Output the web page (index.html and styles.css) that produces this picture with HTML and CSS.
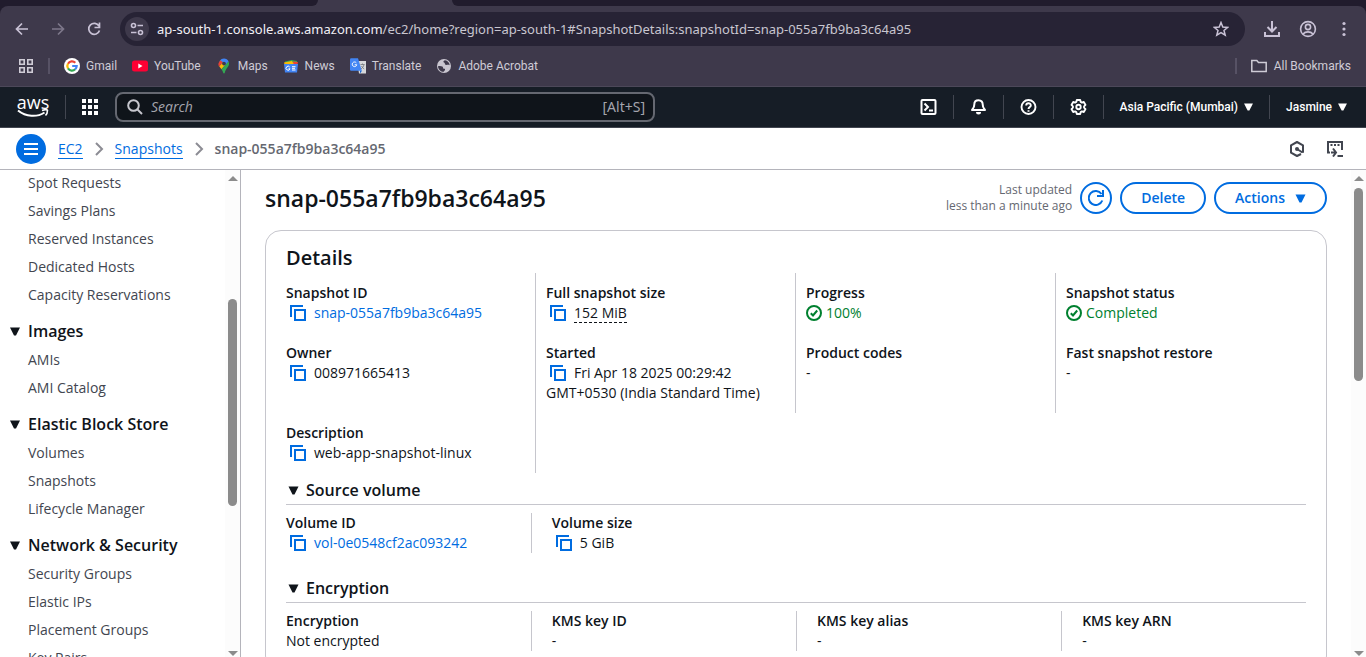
FILE: index.html
```
<!DOCTYPE html>
<html lang="en">
<head>
<meta charset="utf-8">
<title>Snapshot details | EC2 | ap-south-1</title>
<link rel="stylesheet" href="styles.css">
</head>
<body>
<svg class="sprite" aria-hidden="true">
  <symbol id="copy" viewBox="0 0 16 16"><path d="M1 12V1h12" fill="none" stroke="currentColor" stroke-width="2"/><rect x="5" y="5" width="10" height="10" fill="none" stroke="currentColor" stroke-width="2"/></symbol>
  <symbol id="caret" viewBox="0 0 10 9"><path d="M0 .5h10L6 8.500H4z" fill="currentColor"/></symbol>
  <symbol id="check" viewBox="0 0 16 16"><circle cx="8" cy="8" r="7" fill="none" stroke="currentColor" stroke-width="2"/><path d="M4.800 8.200l2.200 2.300 4.200-5" fill="none" stroke="currentColor" stroke-width="2"/></symbol>
  <symbol id="chev" viewBox="0 0 10 14"><path d="M2 1l6 6-6 6" fill="none" stroke="currentColor" stroke-width="2"/></symbol>
</svg>

<div class="browser">
  <div class="tabstrip"><span class="tab-left"></span><span class="tab-right"></span></div>
  <div class="toolwrap"><div class="tools">
    <div class="toolbar">
      <button class="tool" aria-label="Back"><svg width="16" height="16" viewBox="0 0 16 16"><path d="M14 8H3M8 2.500L2.500 8 8 13.500" fill="none" stroke="currentColor" stroke-width="1.700"/></svg></button>
      <button class="tool dim" aria-label="Forward"><svg width="16" height="16" viewBox="0 0 16 16"><path d="M2 8h11M8 2.500L13.500 8 8 13.500" fill="none" stroke="currentColor" stroke-width="1.700"/></svg></button>
      <button class="tool" aria-label="Reload"><svg width="16" height="16" viewBox="0 0 16 16"><path d="M13 5A5.500 5.500 0 1 0 13.500 9.500M13.500 1.500v5h-5" fill="none" stroke="currentColor" stroke-width="1.700"/></svg></button>
      <div class="address">
        <button class="site" aria-label="Site information"><svg width="14" height="14" viewBox="0 0 14 14"><g fill="none" stroke="currentColor" stroke-width="1.600"><circle cx="3.500" cy="3.500" r="2"/><path d="M7.500 3.500H13M1 10.500h5.500"/><circle cx="10.500" cy="10.500" r="2"/></g></svg></button>
        <span class="url"><b>ap-south-1.console.aws.amazon.com</b>/ec2/home?region=ap-south-1#SnapshotDetails:snapshotId=snap-055a7fb9ba3c64a95</span>
        <button class="star" aria-label="Bookmark this tab"><svg width="16" height="16" viewBox="0 0 16 16"><path d="M8 1.500l1.800 4.500 4.900.4-3.700 3.100 1.200 4.700L8 11.600l-4.200 2.600L5 9.500 1.300 6.400l4.900-.4z" fill="none" stroke="currentColor" stroke-width="1.500"/></svg></button>
      </div>
      <button class="tool right" aria-label="Downloads"><svg width="18" height="18" viewBox="0 0 18 18"><path d="M9 1v10M4.500 7L9 11.500 13.500 7M2 12v4h14v-4" fill="none" stroke="currentColor" stroke-width="2"/></svg></button>
      <button class="tool right" aria-label="Profile"><svg width="18" height="18" viewBox="0 0 18 18"><g fill="none" stroke="currentColor" stroke-width="1.600"><circle cx="9" cy="9" r="7.400"/><circle cx="9" cy="7" r="2.600"/><path d="M4 14c2.500-2.800 7.500-2.800 10 0"/></g></svg></button>
      <button class="tool right" aria-label="Menu"><svg width="18" height="18" viewBox="0 0 18 18" fill="currentColor"><circle cx="9" cy="3.500" r="1.600"/><circle cx="9" cy="9" r="1.600"/><circle cx="9" cy="14.500" r="1.600"/></svg></button>
    </div>
    <div class="bookmarks">
      <button class="apps" aria-label="Apps"><svg width="14" height="14" viewBox="0 0 14 14"><g fill="none" stroke="currentColor" stroke-width="1.600"><path d="M.8.8h4.400v4.400H.8zM8.800.8h4.400v4.400H8.800zM.8 8.800h4.400v4.400H.8zM8.800 8.800h4.400v4.400H8.800z"/></g></svg></button>
      <span class="bar"></span>
      <a href="#"><svg width="16" height="16" viewBox="0 0 16 16"><circle cx="8" cy="8" r="8" fill="#fff"/><g fill="none" stroke-width="2.200"><path d="M11.300 4.700A4.700 4.700 0 0 0 4 5.700" stroke="#ea4335"/><path d="M4 5.600a4.700 4.700 0 0 0 0 4.800" stroke="#fbbc05"/><path d="M4 10.400a4.700 4.700 0 0 0 7.200.9" stroke="#34a853"/><path d="M11.100 11.400A4.700 4.700 0 0 0 12.700 8H8.200" stroke="#4285f4"/></g></svg>Gmail</a>
      <a href="#"><svg width="16" height="16" viewBox="0 0 16 16"><rect y="2.500" width="16" height="11" rx="2.500" fill="#ff0033"/><path d="M6.300 5.500v5l4.200-2.500z" fill="#fff"/></svg>YouTube</a>
      <a href="#"><svg width="16" height="16" viewBox="0 0 16 16"><path d="M3.500 3.200C4.800 1.200 6.300.5 8 .5c2 0 3.800 1.200 4.600 3L8 9z" fill="#4285f4"/><path d="M3.200 8.300L7 4.300 9 7 5.500 11.200C4.700 10.200 3.800 9.300 3.200 8.300z" fill="#fbbc05"/><path d="M12.600 3.500c.9 2 .4 4-.8 5.600C10.300 11 9.300 12.500 8.800 14.800c-.2.900-1.400.9-1.600 0-.3-1.300-.9-2.500-1.700-3.600z" fill="#34a853"/><path d="M2.900 4.500L4.300 2.200l2.700 2-4 4.200c-.7-1.200-.9-2.600-.1-3.900z" fill="#ea4335"/><circle cx="8" cy="5.600" r="1.900" fill="#3e394b"/></svg>Maps</a>
      <a href="#"><svg width="16" height="16" viewBox="0 0 16 16"><path d="M2 3.500l7-1.500 1 5H3z" fill="#34a853"/><path d="M8 2l6 1-1 5H7z" fill="#34a853"/><path d="M10 3.500l5 .5-1 4h-4z" fill="#ea4335"/><path d="M1 4.500l8-1.500 3 5H2z" fill="#fbbc05"/><path d="M1 6h14l-1 8.500H2z" fill="#4285f4"/><path d="M6.700 9a2 2 0 1 0 .3 1.800H5.500M9 8.700h3.500M9 10.300h3M9 12h3.500" fill="none" stroke="#fff"/></svg>News</a>
      <a href="#"><svg width="16" height="16" viewBox="0 0 16 16"><path d="M7 3h9v12.500H9z" fill="#d5d7da"/><path d="M0 1.500Q0 .3 1.200.3H8l3.800 12.500H1.200Q0 12.800 0 11.600z" fill="#4285f4"/><path d="M10 12.800h2L10 15.500z" fill="#1967d2"/><path d="M6.300 4.800a2.300 2.300 0 1 0 .5 2H4.700" fill="none" stroke="#fff"/><path d="M10.500 6.500h4M12.500 5.500v1M14 6.500c-.4 2-1.500 3.500-3 4.500M11.500 8c.6 1.300 1.500 2.300 2.700 3" fill="none" stroke="#70757a" stroke-width=".8"/></svg>Translate</a>
      <a href="#"><svg width="16" height="16" viewBox="0 0 16 16"><circle cx="8" cy="8" r="7" fill="#c9c6d0"/><path d="M2 8.200c1.800-.6 3.300-.2 4.300.3 1.200.6.200 2.200 2 2.300 1.500.1.500 2-.6 3-2.600.2-5.500-2-5.700-5.600zM9 2.300c-1.700.5-2.200 1.900-1 2.300 1.500.5.300 1.600 1.500 2.200 1 .5 2.500-.6 4.200.4C13.300 4.500 11.700 2.800 9 2.300z" fill="#3e394b"/></svg>Adobe Acrobat</a>
      <span class="grow"></span>
      <span class="bar"></span>
      <a class="all" href="#"><svg width="16" height="16" viewBox="0 0 16 16"><path d="M.8 12.500v-10h5l1.700 2h7.700v9H.8z" fill="none" stroke="currentColor" stroke-width="1.500"/></svg>All Bookmarks</a>
    </div>
  </div></div>
</div>

<header class="aws">
  <a class="logo" href="#" aria-label="AWS home"><span>aws</span><svg width="32" height="9" viewBox="0 0 32 9"><path d="M1 1.500C9 8 20 8.500 27.500 3.500" fill="none" stroke="currentColor" stroke-width="2"/><path d="M25 1.500c3-1.200 5.500-.8 5.500-.3 0 1.300-.7 4-2 5.300" fill="none" stroke="currentColor" stroke-width="1.600"/></svg></a>
  <span class="split"></span>
  <button class="services" aria-label="Services"><svg width="16" height="16" viewBox="0 0 16 16"><path d="M0 0h4v4H0zM6 0h4v4H6zM12 0h4v4h-4zM0 6h4v4H0zM6 6h4v4H6zM12 6h4v4h-4zM0 12h4v4H0zM6 12h4v4H6zM12 12h4v4h-4z" fill="currentColor"/></svg></button>
  <label class="search">
    <svg width="16" height="16" viewBox="0 0 16 16"><circle cx="6.500" cy="6.500" r="5.300" fill="none" stroke="currentColor" stroke-width="2"/><path d="M10.500 10.500l4.500 4.500" stroke="currentColor" stroke-width="2"/></svg>
    <input type="search" placeholder="Search" aria-label="Search">
    <kbd>[Alt+S]</kbd>
  </label>
  <nav class="account">
    <button aria-label="CloudShell"><svg width="17" height="16" viewBox="0 0 16 16"><g fill="none" stroke="currentColor" stroke-width="2"><rect x="1" y="1" width="14" height="14" rx="1"/><path d="M4 4.500L7.500 8 4 11.500M8.500 11.500h4"/></g></svg></button>
    <button aria-label="Notifications"><svg width="17" height="16" viewBox="0 0 16 16"><path d="M8 1.200c-3 0-4.200 2-4.200 4.300 0 3-1.300 4-2.300 5.500h13c-1-1.500-2.300-2.500-2.300-5.500C12.200 3.200 11 1.200 8 1.200z" fill="none" stroke="currentColor" stroke-width="2" stroke-linejoin="round"/><path d="M5.500 13h5a2.500 2.500 0 0 1-5 0z" fill="currentColor"/></svg></button>
    <button aria-label="Help"><svg width="17" height="16" viewBox="0 0 16 16"><g fill="none" stroke="currentColor" stroke-width="1.900"><circle cx="8" cy="8" r="7"/><path d="M5.700 6.500C5.700 3.600 10.300 3.600 10.300 6.400 10.300 8 8 7.900 8 10M8 11.200v1.600"/></g></svg></button>
    <button aria-label="Settings"><svg width="17" height="16" viewBox="0 0 16 16"><g fill="none" stroke="currentColor" stroke-width="1.900" stroke-linejoin="round"><path d="M6.300 1h3.400l.5 1.900 1.200.7 1.900-.6L15 5.900l-1.400 1.400v1.400L15 10.100 13.300 13l-1.900-.6-1.200.7-.5 1.900H6.300l-.5-1.900-1.200-.7-1.900.6L1 10.100l1.400-1.400V7.300L1 5.900 2.700 3l1.900.6 1.200-.7z"/><circle cx="8" cy="8" r="2.200"/></g></svg></button>
    <button>Asia Pacific (Mumbai)<svg width="9" height="8"><use href="#caret"/></svg></button>
    <button>Jasmine<svg width="9" height="8"><use href="#caret"/></svg></button>
  </nav>
</header>

<div class="crumbs">
  <button class="burger" aria-label="Toggle navigation"><svg width="14" height="12" viewBox="0 0 14 12"><path d="M0 1h14M0 6h14M0 11h14" stroke="currentColor" stroke-width="2"/></svg></button>
  <nav class="trail">
    <a href="#">EC2</a><svg width="10" height="14"><use href="#chev"/></svg><a href="#">Snapshots</a><svg width="10" height="14"><use href="#chev"/></svg><strong>snap-055a7fb9ba3c64a95</strong>
  </nav>
  <div class="helpers">
    <button aria-label="Amazon Q"><svg width="16" height="16" viewBox="0 0 16 16"><path d="M12 13l-4 2-6-3.300V4.300L8 1l6 3.300v7.400" fill="none" stroke="currentColor" stroke-width="2" stroke-linejoin="round"/><path d="M8 8l5.500 3.500" stroke="currentColor" stroke-width="2"/><circle cx="8" cy="8" r="2" fill="currentColor"/></svg></button>
    <button aria-label="Open tools"><svg width="16" height="16" viewBox="0 0 16 16"><path d="M3 11.500H1V1h14v8M4 11.500h4M6 7.500l3 4-3 4" fill="none" stroke="currentColor" stroke-width="2"/><path d="M10.500 15H16M3.500 4h2M7 4h2M10.500 4h2" stroke="currentColor" stroke-width="2"/></svg></button>
  </div>
</div>

<div class="body">
  <aside class="side">
    <nav>
      <ul><li><a href="#">Spot Requests</a></li><li><a href="#">Savings Plans</a></li><li><a href="#">Reserved Instances</a></li><li><a href="#">Dedicated Hosts</a></li><li><a href="#">Capacity Reservations</a></li></ul>
      <h3><svg width="10" height="9"><use href="#caret"/></svg>Images</h3>
      <ul><li><a href="#">AMIs</a></li><li><a href="#">AMI Catalog</a></li></ul>
      <h3><svg width="10" height="9"><use href="#caret"/></svg>Elastic Block Store</h3>
      <ul><li><a href="#">Volumes</a></li><li><a href="#">Snapshots</a></li><li><a href="#">Lifecycle Manager</a></li></ul>
      <h3><svg width="10" height="9"><use href="#caret"/></svg>Network &amp; Security</h3>
      <ul><li><a href="#">Security Groups</a></li><li><a href="#">Elastic IPs</a></li><li><a href="#">Placement Groups</a></li><li><a href="#">Key Pairs</a></li></ul>
    </nav>
    <div class="scroll side-scroll"><i class="up"></i><i class="before"></i><i class="thumb"></i><i class="after"></i><i class="down"></i></div>
  </aside>

  <main>
    <div class="title">
      <h1>snap-055a7fb9ba3c64a95</h1>
      <p>Last updated<br>less than a minute ago</p>
      <button class="btn round" aria-label="Refresh"><svg width="16" height="16" viewBox="0 0 16 16"><path d="M14.300 10.500A7 7 0 1 1 13.500 4M15 0v6H9" fill="none" stroke="currentColor" stroke-width="2"/></svg></button>
      <button class="btn">Delete</button>
      <button class="btn">Actions<svg width="11" height="9"><use href="#caret"/></svg></button>
    </div>
    <section class="card">
      <h2>Details</h2>
      <div class="grid">
        <dl><dt>Snapshot ID</dt><dd><svg class="copy"><use href="#copy"/></svg><a href="#">snap-055a7fb9ba3c64a95</a></dd></dl>
        <dl><dt>Full snapshot size</dt><dd><svg class="copy"><use href="#copy"/></svg><span class="hint">152 MiB</span></dd></dl>
        <dl><dt>Progress</dt><dd class="ok"><svg><use href="#check"/></svg>100%</dd></dl>
        <dl><dt>Snapshot status</dt><dd class="ok"><svg><use href="#check"/></svg>Completed</dd></dl>
        <dl><dt>Owner</dt><dd><svg class="copy"><use href="#copy"/></svg>008971665413</dd></dl>
        <dl><dt>Started</dt><dd><svg class="copy"><use href="#copy"/></svg>Fri Apr 18 2025 00:29:42 GMT+0530 (India Standard Time)</dd></dl>
        <dl><dt>Product codes</dt><dd>-</dd></dl>
        <dl><dt>Fast snapshot restore</dt><dd>-</dd></dl>
        <dl><dt>Description</dt><dd><svg class="copy"><use href="#copy"/></svg>web-app-snapshot-linux</dd></dl>
      </div>
      <h3><svg width="11" height="9"><use href="#caret"/></svg>Source volume</h3>
      <div class="cols">
        <dl><dt>Volume ID</dt><dd><svg class="copy"><use href="#copy"/></svg><a href="#">vol-0e0548cf2ac093242</a></dd></dl>
        <dl><dt>Volume size</dt><dd><svg class="copy"><use href="#copy"/></svg>5 GiB</dd></dl>
      </div>
      <h3><svg width="11" height="9"><use href="#caret"/></svg>Encryption</h3>
      <div class="cols">
        <dl><dt>Encryption</dt><dd>Not encrypted</dd></dl>
        <dl><dt>KMS key ID</dt><dd>-</dd></dl>
        <dl><dt>KMS key alias</dt><dd>-</dd></dl>
        <dl><dt>KMS key ARN</dt><dd>-</dd></dl>
      </div>
    </section>
  </main>
  <div class="scroll main-scroll"><i class="up"></i><i class="before"></i><i class="thumb"></i><i class="after"></i><i class="down"></i></div>
</div>
</body>
</html>
```
FILE: styles.css
```
* { box-sizing: border-box; }
body { margin: 0; height: 100vh; overflow: hidden; display: flex; flex-direction: column; background: #fff; color: #0f141a; font: 14px/20px "Open Sans", "Noto Sans", sans-serif; }
button { border: 0; padding: 0; background: none; color: inherit; font: inherit; display: inline-flex; align-items: center; justify-content: center; }
a { color: inherit; text-decoration: none; }
ul, dl, dd, p, h1, h2, h3 { margin: 0; padding: 0; list-style: none; }
svg { flex: none; }
.sprite { display: none; }

/* Browser frame */
.browser { flex: none; background: #211c2d; color: #c9c2d6; font: 12px/16px Roboto, sans-serif; }
.tabstrip { display: flex; height: 6px; gap: 134px; background: #3e394b; }
.tab-left { width: 318px; background: #211c2d; border-bottom-right-radius: 6px; }
.tab-right { flex: 1; background: #211c2d; border-bottom-left-radius: 6px; }
.tools { background: #3e394b; border-radius: 8px 8px 0 0; border-bottom: 1px solid #4c4859; }
.toolbar { display: flex; align-items: center; padding: 6px 13px 6px 14px; gap: 20px; }
.tool { width: 16px; height: 34px; }
.tool.dim { color: #7d778a; }
.tool.right { width: 18px; margin-right: -2px; }
.tool.right:last-child { margin-right: 0; }
.address { flex: 1; display: flex; align-items: center; height: 34px; padding: 0 16px 0 5px; border-radius: 17px; background: #272335; gap: 8px; margin: 0 -2px; }
.site { width: 24px; height: 24px; border-radius: 50%; background: #3e394b; }
.url { flex: 1; font: 13px/16px "Noto Sans", sans-serif; color: #c9c6d0; white-space: nowrap; }
.url b { font-weight: 400; color: #f1eff5; }
.bookmarks { display: flex; align-items: center; height: 34px; padding: 0 15px 6px 19px; gap: 15px; color: #cfccd6; }
.bookmarks a { display: flex; align-items: center; gap: 6px; }
.bookmarks .all { gap: 7px; }
.bar { width: 2px; height: 16px; background: #575265; }
.bar + a { margin-left: -1px; }
.grow { flex: 1; }

/* Console header */
.aws { flex: none; display: flex; align-items: center; height: 41px; padding: 0 3px 0 17px; background: #161d26; border-bottom: 1px solid #424650; color: #fff; }
.logo { width: 32px; display: flex; flex-direction: column; align-items: center; }
.logo span { font-size: 18px; line-height: 13px; }
.split { width: 1px; height: 24px; background: #424650; margin: 0 16px; }
.search { display: flex; align-items: center; width: 540px; height: 30px; margin-left: 17px; padding: 0 8px 0 10px; gap: 8px; background: #0f141a; border: 2px solid #656871; border-radius: 8px; color: #c6c6cd; }
.search input { flex: 1; min-width: 0; padding: 0; border: 0; background: none; color: #c6c6cd; font: inherit; }
.search input::placeholder { color: #a4a4ad; font-style: italic; opacity: 1; }
.search kbd { font: 14px/20px "Noto Sans", sans-serif; color: #a4a4ad; }
.account { display: flex; align-items: center; margin-left: auto; }
.account button { height: 24px; padding: 0 16px; gap: 6px; border-right: 1px solid #424650; font: 500 12px/16px Roboto, sans-serif; white-space: nowrap; }
.account button:last-child { border: 0; }

/* Breadcrumbs */
.crumbs { flex: none; display: flex; align-items: center; height: 42px; padding: 0 23px 0 16px; border-bottom: 1px solid #b4b4bb; }
.burger { width: 30px; height: 30px; border-radius: 50%; background: #006ce0; color: #fff; }
.trail { display: flex; align-items: center; gap: 11px; margin-left: 12px; color: #8c8c94; }
.trail a { color: #006ce0; line-height: 18px; border-top: 1px solid transparent; border-bottom: 1px solid #006ce0; }
.trail strong { color: #656871; font-weight: 600; }
.helpers { display: flex; gap: 22px; margin-left: auto; color: #424650; }

/* Side navigation */
.body { flex: 1; min-height: 0; display: flex; }
.side { flex: none; width: 241px; display: flex; border-right: 1px solid #b4b4bb; overflow: hidden; }
.side nav { flex: 1; padding: 3px 0 0 28px; white-space: nowrap; }
.side ul { display: grid; gap: 8px; color: #424650; }
.side h3 { display: flex; align-items: center; gap: 8px; margin: 15px 0 8px -18px; font-size: 16px; line-height: 22px; }
h1, h2, h3, dt { font-weight: 600; }

/* Scrollbars */
.scroll { flex: none; width: 15px; display: flex; flex-direction: column; align-items: center; background: #fcfcfc; padding: 6px 0 1px; }
.up, .down { border: 5px solid transparent; }
.up { border-top: 0; border-bottom-color: #8b8b8b; margin-bottom: 6px; }
.down { border-bottom: 0; border-top-color: #8b8b8b; }
.thumb { width: 9px; border-radius: 5px; background: #8b8b8b; }
.side-scroll .before { flex: 112; }
.side-scroll .thumb { flex: 207; }
.side-scroll .after { flex: 145; }
.main-scroll .before { flex: 1; }
.main-scroll .thumb { flex: 193; }
.main-scroll .after { flex: 271; }

/* Snapshot page */
main { flex: 1; min-width: 0; padding: 12px 24px 0; overflow: hidden; }
.title { display: flex; align-items: center; gap: 8px; }
.title h1 { font-size: 23px; line-height: 30px; margin-right: auto; }
.title p { font-size: 12px; line-height: 16px; color: #656871; text-align: right; }
.btn { height: 32px; padding: 0 19px; gap: 10px; border: 2px solid #006ce0; border-radius: 16px; color: #006ce0; font-weight: 600; }
.btn.round { width: 32px; padding: 0; }
.card { margin-top: 16px; padding: 15px 20px 20px; border: 1px solid #c6c6cd; border-radius: 16px; }
.card h2 { font-size: 20px; line-height: 24px; margin-bottom: 3px; }
.grid { display: grid; grid-template-columns: repeat(4, 1fr); margin: 0 -10px; }
.grid dl { padding: 10px; border-right: 1px solid #c6c6cd; }
.grid dl:nth-child(4n) { border-right: 0; }
dd a { color: #006ce0; }
dd svg { width: 16px; height: 16px; vertical-align: -3px; margin-right: 4px; }
dd .copy { color: #006ce0; margin: 0 8px 0 4px; }
.ok { color: #00802f; }
.hint { border-bottom: 1px dashed #0f141a; }
.card h3 { display: flex; align-items: center; gap: 7px; padding: 6px 0 3px 2px; border-bottom: 1px solid #c6c6cd; font-size: 16px; line-height: 22px; }
.cols + h3 { margin-top: 18px; }
.cols { display: grid; grid-template-columns: 12fr 13fr 13fr 12fr; margin-top: 8px; }
.cols dl + dl { border-left: 1px solid #c6c6cd; padding-left: 20px; }
```
